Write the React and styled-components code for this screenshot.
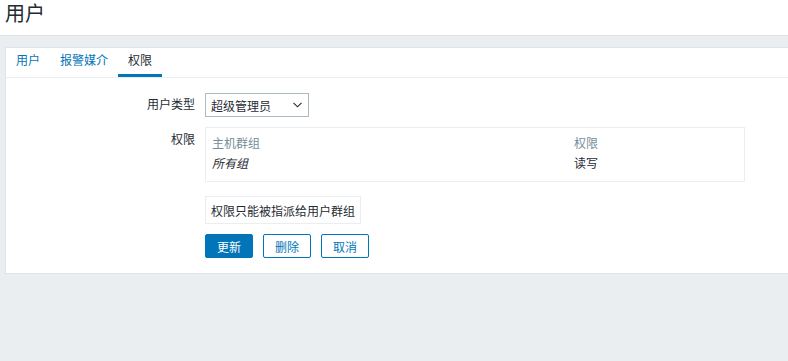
import React from "react";
import styled, { createGlobalStyle } from "styled-components";

const Global = createGlobalStyle`
  html, body { margin: 0; padding: 0; }
  body {
    background: #ebeef0;
    font-family: "Liberation Sans", Arial, "Noto Sans CJK SC", sans-serif;
    font-size: 12px;
    color: #1f2c33;
    overflow: hidden;
  }
  * { box-sizing: border-box; }
`;

const Header = styled.header`
  background: #ffffff;
  height: 36px;
  border-bottom: 1px solid #dfe4e7;
  padding: 0 5px;
`;

const Title = styled.h1`
  margin: 0;
  font-size: 20px;
  font-weight: normal;
  line-height: 28px;
  color: #1f2c33;
`;

const Main = styled.main`
  padding: 11px 0 0 5px;
`;

const Panel = styled.section`
  background: #ffffff;
  border: 1px solid #dfe4e7;
  border-right: none;
`;

const TabBar = styled.nav`
  display: flex;
  height: 30px;
  border-bottom: 1px solid #ebeef0;
`;

const Tab = styled.div`
  padding: 0 10px;
  height: 29px;
  line-height: 27px;
  border-bottom: 3px solid ${(p) => (p.$active ? "#0275b8" : "transparent")};
  color: ${(p) => (p.$active ? "#1f2c33" : "#0275b8")};
  cursor: pointer;
`;

const Form = styled.div`
  display: flex;
  flex-direction: column;
  padding: 15px 0 15px 0;
`;

const Row = styled.div`
  display: grid;
  grid-template-columns: 189px 1fr;
  column-gap: 10px;
  align-items: ${(p) => (p.$top ? "start" : "center")};
  margin-top: ${(p) => p.$mt || 0}px;
`;

const Label = styled.div`
  text-align: right;
  line-height: 14px;
  padding-top: ${(p) => (p.$top ? 6 : 0)}px;
`;

const Field = styled.div`
  display: flex;
  gap: 10px;
`;

const Select = styled.div`
  width: 104px;
  height: 24px;
  border: 1px solid #acbbc2;
  display: flex;
  align-items: center;
  justify-content: space-between;
  padding: 0 6px 0 5px;
  color: #1f2c33;
`;

const TableBox = styled.div`
  width: 540px;
  border: 1px solid #ebeef0;
  padding: 4px 6px 9px;
`;

const TRow = styled.div`
  display: grid;
  grid-template-columns: 362px 1fr;
  height: 20px;
  align-items: center;
  color: ${(p) => (p.$head ? "#768d99" : "#1f2c33")};
`;

const Italic = styled.span`
  font-style: italic;
`;

const Info = styled.div`
  height: 28px;
  border: 1px solid #ebeef0;
  padding: 0 5px;
  display: flex;
  align-items: center;
  color: #1f2c33;
`;

const Button = styled.button`
  width: 48px;
  height: 24px;
  border-radius: 2px;
  font-family: inherit;
  font-size: 12px;
  padding: 0;
  cursor: pointer;
  border: 1px solid #0275b8;
  background: ${(p) => (p.$primary ? "#0275b8" : "#ffffff")};
  color: ${(p) => (p.$primary ? "#ffffff" : "#0275b8")};
`;

const Chevron = () => (
  <svg width="9" height="6" viewBox="0 0 9 6">
    <path d="M0.5 0.8 L4.5 4.8 L8.5 0.8" fill="none" stroke="#1f2c33" strokeWidth="1.1" />
  </svg>
);

export default function App() {
  return (
    <>
      <Global />
      <Header>
        <Title>用户</Title>
      </Header>
      <Main>
        <Panel>
          <TabBar>
            <Tab>用户</Tab>
            <Tab>报警媒介</Tab>
            <Tab $active>权限</Tab>
          </TabBar>
          <Form>
            <Row>
              <Label>用户类型</Label>
              <Field>
                <Select>
                  <span>超级管理员</span>
                  <Chevron />
                </Select>
              </Field>
            </Row>
            <Row $top $mt={10}>
              <Label $top>权限</Label>
              <Field>
                <TableBox>
                  <TRow $head>
                    <span>主机群组</span>
                    <span>权限</span>
                  </TRow>
                  <TRow>
                    <Italic>所有组</Italic>
                    <span>读写</span>
                  </TRow>
                </TableBox>
              </Field>
            </Row>
            <Row $mt={14}>
              <Label />
              <Field>
                <Info>权限只能被指派给用户群组</Info>
              </Field>
            </Row>
            <Row $mt={10}>
              <Label />
              <Field>
                <Button $primary>更新</Button>
                <Button>删除</Button>
                <Button>取消</Button>
              </Field>
            </Row>
          </Form>
        </Panel>
      </Main>
    </>
  );
}
